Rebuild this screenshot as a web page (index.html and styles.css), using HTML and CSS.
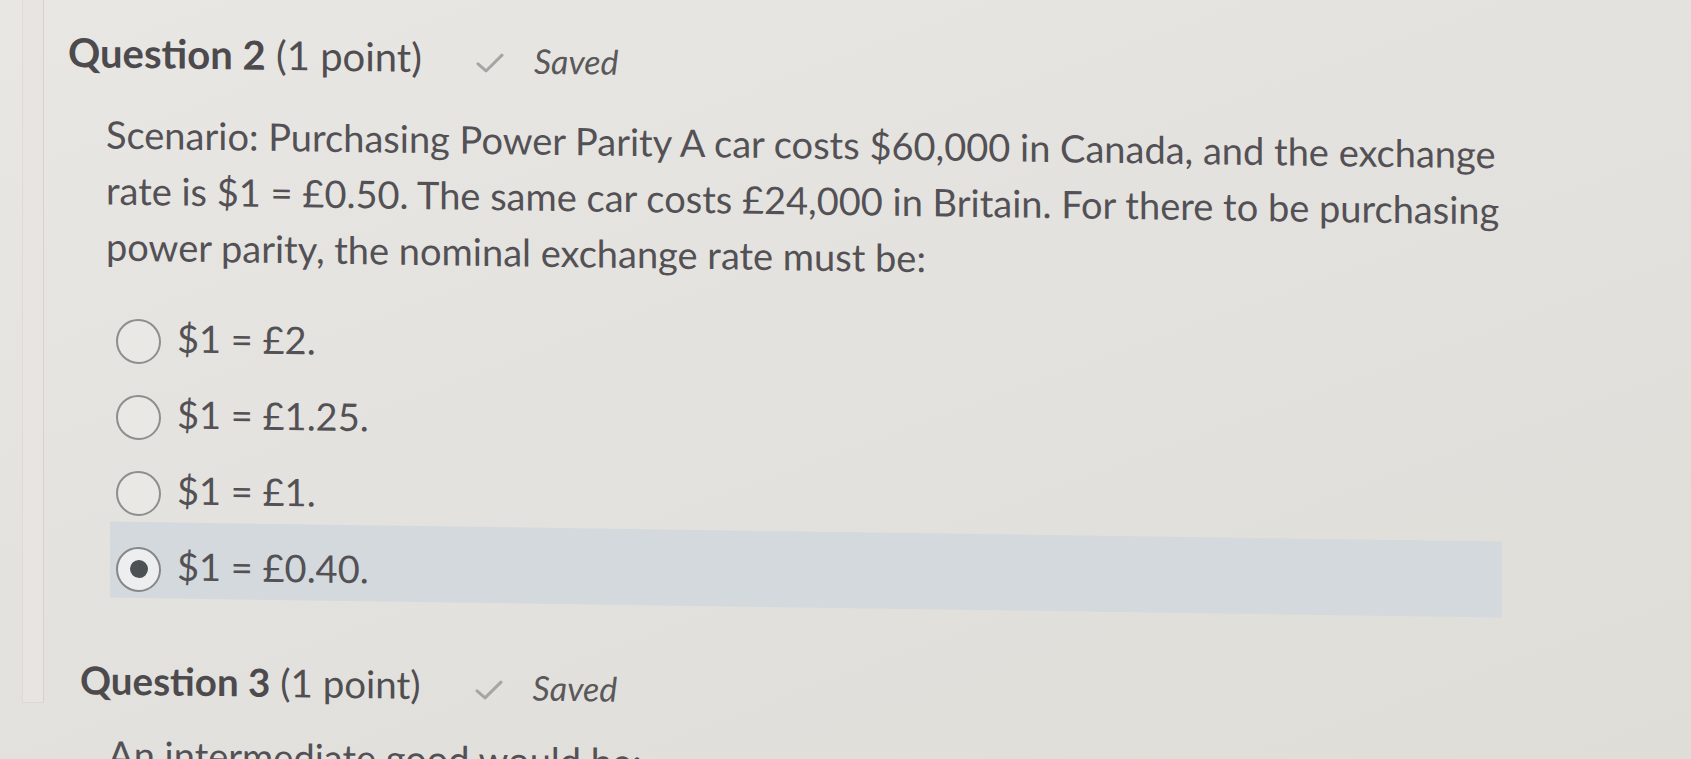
FILE: index.html
```html
<!DOCTYPE html>
<html lang="en">
<head>
<meta charset="utf-8">
<title>Quiz</title>
<link rel="stylesheet" href="styles.css">
</head>
<body>
<div class="page">
  <div class="rail"></div>
  <main class="content">
    <section class="question q2">
      <h2 class="q-head">
        <span class="q-title"><b>Question 2</b> (1 point)</span>
        <span class="saved"><svg class="check" viewBox="0 0 28 22" width="28" height="22"><path d="M2 12 L10 19 L26 3" fill="none" stroke="#a6a5a3" stroke-width="3" stroke-linecap="round" stroke-linejoin="round"/></svg><i>Saved</i></span>
      </h2>
      <p class="q-text">Scenario: Purchasing Power Parity A car costs $60,000 in Canada, and the exchange rate is $1 = £0.50. The same car costs £24,000 in Britain. For there to be purchasing power parity, the nominal exchange rate must be:</p>
      <ul class="options">
        <li class="opt"><span class="radio"></span><span class="opt-text">$1 = £2.</span></li>
        <li class="opt"><span class="radio"></span><span class="opt-text">$1 = £1.25.</span></li>
        <li class="opt"><span class="radio"></span><span class="opt-text">$1 = £1.</span></li>
        <li class="opt selected"><span class="radio checked"></span><span class="opt-text">$1 = £0.40.</span></li>
      </ul>
    </section>
    <section class="question q3">
      <h2 class="q-head">
        <span class="q-title"><b>Question 3</b> (1 point)</span>
        <span class="saved"><svg class="check" viewBox="0 0 28 22" width="28" height="22"><path d="M2 12 L10 19 L26 3" fill="none" stroke="#a6a5a3" stroke-width="3" stroke-linecap="round" stroke-linejoin="round"/></svg><i>Saved</i></span>
      </h2>
      <p class="q-text">An intermediate good would be:</p>
    </section>
  </main>
</div>
</body>
</html>
```

FILE: styles.css
```css
html, body {
  margin: 0;
  padding: 0;
  height: 100%;
  overflow: hidden;
}
body {
  font-family: Lato, "Open Sans", sans-serif;
  color: #535155;
  background: linear-gradient(160deg, #e8e7e3 0%, #e4e2de 45%, #dfddd8 100%);
}
.page {
  position: relative;
  height: 759px;
  overflow: hidden;
}
.rail {
  position: absolute;
  left: 22px;
  top: 0;
  width: 20px;
  height: 702px;
  border-left: 1px solid #dedbd6;
  border-right: 1px solid #d5d2cd;
  border-bottom: 1px solid #dcd9d4;
  background: #e7e5e1;
}
.content {
  transform: skewY(0.82deg);
  transform-origin: 0 0;
  padding-top: 27px;
}
.question { margin: 0; }
.q-head {
  margin: 0;
  display: flex;
  align-items: baseline;
  font-size: 40px;
  line-height: 1.2;
  font-weight: 400;
  color: #514e52;
}
.q2 .q-head { padding-left: 68px; }
.q3 .q-head { padding-left: 80px; margin-top: 59px; font-size: 38.5px; }
.q-title b { font-weight: 700; color: #4d4a4e; }
.saved {
  display: flex;
  align-items: baseline;
  margin-left: 54px;
  font-size: 34px;
  color: #5a585a;
}
.saved i { font-style: italic; }
.check {
  margin-right: 30px;
  position: relative;
  top: 1px;
}
.q-text {
  margin: 0;
  font-size: 38px;
  line-height: 56px;
  width: 1415px;
}
.q2 .q-text { margin: 29px 0 0 106px; }
.q3 .q-text { margin: 23px 0 0 108px; }
.options {
  list-style: none;
  margin: 20px 0 0 110px;
  padding: 0;
  width: 1392px;
}
.opt {
  display: flex;
  align-items: center;
  height: 76px;
  box-sizing: border-box;
  padding: 25px 0 7px 6px;
  font-size: 38px;
}
.opt.selected { background: #d3d9dc; }
.radio {
  width: 41px;
  height: 41px;
  border: 2px solid #8f8e8e;
  border-radius: 50%;
  background: #e9e8e5;
  flex: none;
  display: flex;
  align-items: center;
  justify-content: center;
}
.radio.checked { background: #eceeef; border-color: #878787; }
.radio.checked::after {
  content: "";
  width: 18px;
  height: 18px;
  border-radius: 50%;
  background: #4c5154;
}
.opt-text {
  margin-left: 16px;
  line-height: 46px;
  padding-bottom: 9px;
}
```
